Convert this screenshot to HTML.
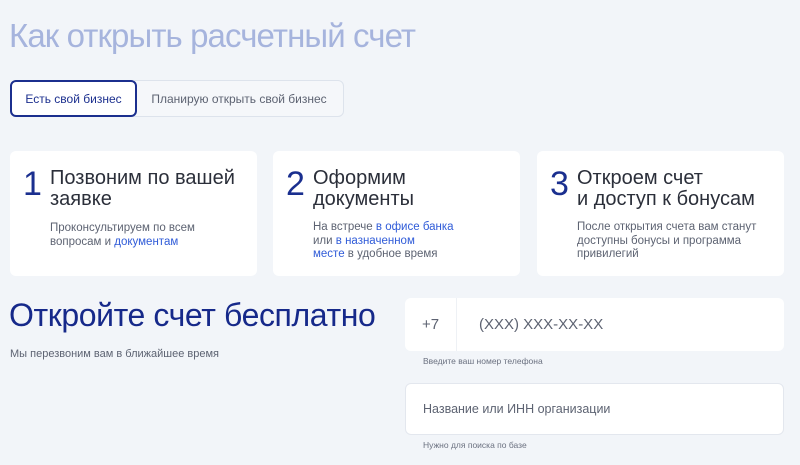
<!DOCTYPE html>
<html><head><meta charset="utf-8"><style>
*{margin:0;padding:0;box-sizing:border-box}
body{width:800px;height:465px;background:#f2f5f9;font-family:"Liberation Sans","DejaVu Sans",sans-serif;position:relative;overflow:hidden;color:#2b2f3a}
.a{position:absolute}
h1{position:absolute;left:9px;top:17px;font-size:33px;font-weight:400;color:#a6b4dd;letter-spacing:-0.9px;white-space:nowrap}
.tab{position:absolute;top:80px;height:37px;font-size:12px;display:flex;align-items:center;justify-content:center}
.t1{left:10px;width:127px;border:2px solid #1b2f8e;border-radius:6px;background:#fff;color:#1b2f8e;z-index:2}
.t2{left:134px;width:210px;border:1px solid #dde3ec;border-radius:0 6px 6px 0;color:#5d6372;background:#f5f7fa}
.card{position:absolute;top:151px;width:247px;height:125px;background:#fff;border-radius:6px}
.n{position:absolute;left:13px;top:14px;font-size:34px;color:#1a2f8f}
.h{position:absolute;left:40px;top:17px;font-size:20px;line-height:21px;color:#2b2f3a}
.p{position:absolute;left:40px;top:68px;font-size:11.5px;line-height:13.5px;color:#5d6372}
.p b{font-weight:400;color:#2f5bd8}
.inp{position:absolute;left:405px;width:379px;background:#fff;border-radius:6px}
.hint{position:absolute;left:423px;font-size:8.5px;color:#6b7180}
</style></head><body>
<h1>Как открыть расчетный счет</h1>
<div class="tab t1">Есть свой бизнес</div>
<div class="tab t2">Планирую открыть свой бизнес</div>
<div class="card" style="left:10px"><div class="n">1</div><div class="h">Позвоним по вашей<br>заявке</div><div class="p" style="top:71px">Проконсультируем по всем<br>вопросам и <b>документам</b></div></div>
<div class="card" style="left:273px"><div class="n">2</div><div class="h">Оформим<br>документы</div><div class="p" style="top:70px">На встрече <b>в офисе банка</b><br>или <b>в назначенном</b><br><b>месте</b> в удобное время</div></div>
<div class="card" style="left:537px"><div class="n">3</div><div class="h">Откроем счет<br>и доступ к бонусам</div><div class="p" style="top:70px">После открытия счета вам станут<br>доступны бонусы и программа<br>привилегий</div></div>
<div class="a" style="left:9px;top:297px;font-size:32px;color:#16298a;letter-spacing:-0.4px;white-space:nowrap">Откройте счет бесплатно</div>
<div class="a" style="left:10px;top:348px;font-size:11px;color:#5d6372">Мы перезвоним вам в ближайшее время</div>
<div class="inp" style="top:298px;height:53px"><div class="a" style="left:51px;top:0;width:1px;height:53px;background:#eef1f5"></div><div class="a" style="left:17px;top:18px;font-size:15px;color:#5d6372">+7</div><div class="a" style="left:74px;top:18px;font-size:15px;color:#5d6372">(XXX) XXX-XX-XX</div></div>
<div class="hint" style="top:356px">Введите ваш номер телефона</div>
<div class="inp" style="top:383px;height:52px;border:1px solid #e3e7ee"><div class="a" style="left:17px;top:18px;font-size:12.5px;color:#5d6372">Название или ИНН организации</div></div>
<div class="hint" style="top:440px">Нужно для поиска по базе</div>
</body></html>
